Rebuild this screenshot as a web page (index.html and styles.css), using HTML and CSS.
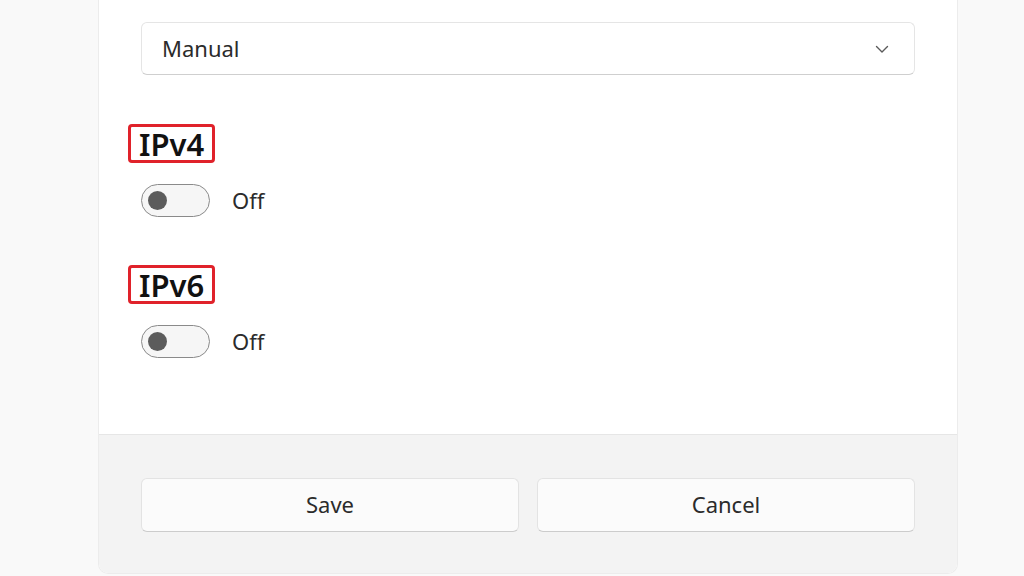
FILE: index.html
```html
<!DOCTYPE html>
<html lang="en">
<head>
    <meta charset="UTF-8">
    <meta name="viewport" content="width=device-width, initial-scale=1.0">
    <title>Edit IP settings</title>
    <link rel="stylesheet" href="styles.css">
</head>
<body>

    <div class="dialog">
        <div class="dialog-body">
            <!-- Settings mode -->
            <div class="dropdown">
                <span>Manual</span>
                <svg class="chevron" width="16" height="16" viewBox="0 0 16 16">
                    <path d="M2.5 5.5 L8 11 L13.5 5.5" fill="none" stroke="#5a5a5a" stroke-width="1.4" stroke-linecap="round" stroke-linejoin="round"/>
                </svg>
            </div>

            <div class="group">
                <h2 class="group-title">IPv4</h2>
                <div class="toggle-row">
                    <span class="toggle"><span class="knob"></span></span>
                    <span class="toggle-label">Off</span>
                </div>
            </div>

            <div class="group">
                <h2 class="group-title">IPv6</h2>
                <div class="toggle-row">
                    <span class="toggle"><span class="knob"></span></span>
                    <span class="toggle-label">Off</span>
                </div>
            </div>
        </div>

        <div class="dialog-footer">
            <button class="btn">Save</button>
            <button class="btn">Cancel</button>
        </div>
    </div>

</body>
</html>
```

FILE: styles.css
```css
body {
    font-family: "Noto Sans", "Open Sans", sans-serif;
    background-color: #f9f9f9;
    color: #2b2b2b;
    margin: 0;
    padding: 0;
}
.dialog {
    margin-left: 98px;
    width: 860px;
    background-color: #fff;
    border-left: 1px solid #ececec;
    border-right: 1px solid #ececec;
    border-bottom: 1px solid #ececec;
    border-radius: 0 0 10px 10px;
    overflow: hidden;
    box-sizing: border-box;
}
.dialog-body {
    padding: 22px 42px 76px 42px;
}
.dropdown {
    height: 53px;
    box-sizing: border-box;
    border: 1px solid #e5e5e5;
    border-bottom-color: #cfcfcf;
    border-radius: 6px;
    background-color: #fff;
    display: flex;
    align-items: center;
    justify-content: space-between;
    padding: 0 24px 2px 20px;
    font-size: 22px;
    color: #2b2b2b;
}
.chevron {
    margin-top: 3px;
}
.group {
    margin-top: 49px;
}
.group + .group {
    margin-top: 48px;
}
.group-title {
    display: inline-block;
    margin: 0 0 0 -13px;
    padding: 0 8px 0 8px;
    height: 39px;
    line-height: 35px;
    box-sizing: border-box;
    border: 3px solid #e0222a;
    border-radius: 4px;
    font-size: 31px;
    font-weight: 600;
    color: #111;
}
.toggle-row {
    display: flex;
    align-items: center;
    margin-top: 21px;
    gap: 22px;
}
.toggle {
    width: 69px;
    height: 33px;
    box-sizing: border-box;
    border: 1px solid #8a8a8a;
    border-radius: 17px;
    background-color: #f6f6f6;
    display: flex;
    align-items: center;
    padding-left: 6px;
}
.knob {
    width: 19px;
    height: 19px;
    border-radius: 50%;
    background-color: #5c5c5c;
}
.toggle-label {
    font-size: 22px;
    color: #2b2b2b;
    margin-bottom: 2px;
}
.dialog-footer {
    background-color: #f3f3f3;
    border-top: 1px solid #e6e6e6;
    padding: 43px 42px 41px 42px;
    display: flex;
    gap: 18px;
}
.btn {
    flex: 1;
    height: 54px;
    padding-bottom: 3px;
    border: 1px solid #e3e3e3;
    border-bottom-color: #cccccc;
    border-radius: 6px;
    background-color: #fbfbfb;
    font-family: inherit;
    font-size: 22px;
    color: #2b2b2b;
}
```
